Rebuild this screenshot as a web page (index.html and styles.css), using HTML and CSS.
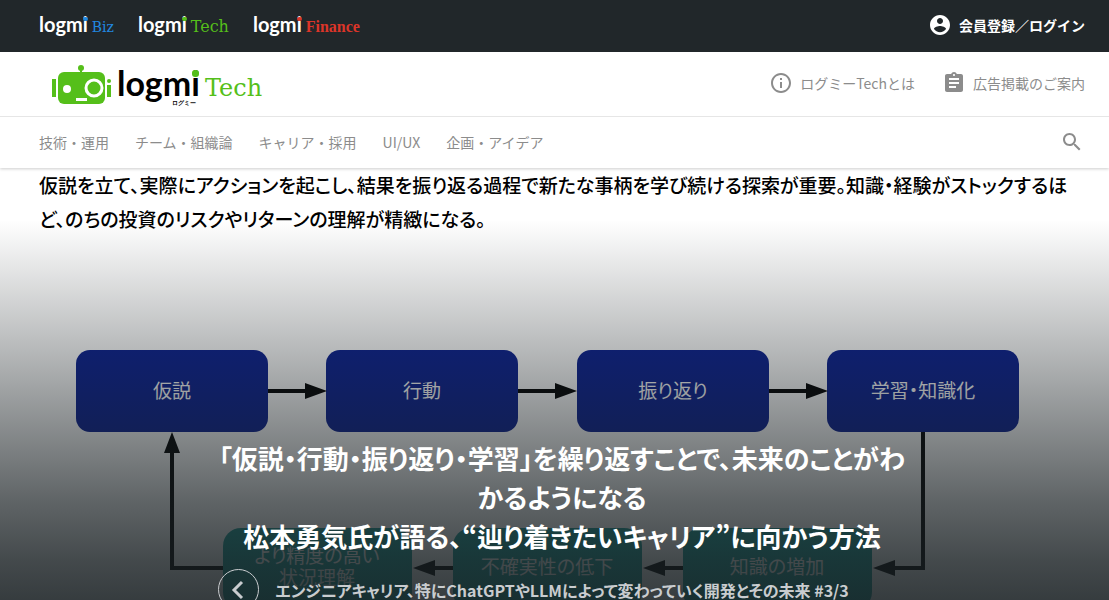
FILE: index.html
```html
<!DOCTYPE html>
<html lang="ja">
<head>
<meta charset="utf-8">
<meta name="viewport" content="width=device-width, initial-scale=1">
<title>logmi Tech</title>
<link rel="stylesheet" href="styles.css">
</head>
<body>
<header class="header">
  <div class="topbar">
    <nav class="brands" aria-label="logmi">
      <a class="brand brand-biz" href="#"><span class="word">logm<span class="dot-i">i</span></span><span class="suffix">Biz</span></a>
      <a class="brand brand-tech" href="#"><span class="word">logm<span class="dot-i">i</span></span><span class="suffix">Tech</span></a>
      <a class="brand brand-finance" href="#"><span class="word">logm<span class="dot-i">i</span></span><span class="suffix">Finance</span></a>
    </nav>
    <a class="login" href="#">
      <svg class="icon" viewBox="0 0 24 24" aria-hidden="true"><path d="M12 2C6.480 2 2 6.480 2 12s4.480 10 10 10 10-4.480 10-10S17.520 2 12 2zm0 3c1.660 0 3 1.340 3 3s-1.340 3-3 3-3-1.340-3-3 1.340-3 3-3zm0 14.200c-2.500 0-4.710-1.280-6-3.220.03-1.990 4-3.080 6-3.080 1.990 0 5.970 1.090 6 3.080-1.290 1.940-3.500 3.220-6 3.220z"/></svg>
      <span>会員登録／ログイン</span>
    </a>
  </div>
  <div class="masthead">
    <a class="logo brand-tech" href="#">
      <svg class="robot" viewBox="0 0 60 42" aria-hidden="true">
        <g fill="#55bf1a">
          <rect x="0" y="15" width="4" height="18"/>
          <circle cx="29" cy="4" r="3"/>
          <rect x="28" y="5" width="2" height="6"/>
          <rect x="6" y="8" width="47" height="32" rx="6"/>
          <rect x="55" y="21" width="4" height="12"/>
          <circle cx="57" cy="17" r="2"/>
        </g>
        <g fill="#fff">
          <circle cx="15" cy="25" r="4"/>
          <rect x="24" y="34" width="11" height="3"/>
        </g>
        <circle cx="42" cy="24" r="8" fill="none" stroke="#fff" stroke-width="3"/>
      </svg>
      <span class="word">logm<span class="dot-i">i</span><span class="ruby">ログミー</span></span><span class="suffix">Tech</span>
    </a>
    <nav class="utility" aria-label="サイト情報">
      <a href="#"><svg class="icon" viewBox="0 0 24 24" aria-hidden="true"><path d="M11 17h2v-6h-2v6zm1-15C6.480 2 2 6.480 2 12s4.480 10 10 10 10-4.480 10-10S17.520 2 12 2zm0 18c-4.410 0-8-3.590-8-8s3.590-8 8-8 8 3.590 8 8-3.590 8-8 8zM11 9h2V7h-2v2z"/></svg><span>ログミーTechとは</span></a>
      <a href="#"><svg class="icon" viewBox="0 0 24 24" aria-hidden="true"><path d="M19 3h-4.180C14.400 1.840 13.300 1 12 1c-1.300 0-2.400.84-2.820 2H5c-1.100 0-2 .9-2 2v14c0 1.100.9 2 2 2h14c1.100 0 2-.9 2-2V5c0-1.100-.9-2-2-2zm-7 0c.55 0 1 .45 1 1s-.45 1-1 1-1-.45-1-1 .45-1 1-1zm2 14H7v-2h7v2zm3-4H7v-2h10v2zm0-4H7V7h10v2z"/></svg><span>広告掲載のご案内</span></a>
    </nav>
  </div>
  <div class="navbar">
    <nav class="categories" aria-label="カテゴリー">
      <a href="#">技術・運用</a>
      <a href="#">チーム・組織論</a>
      <a href="#">キャリア・採用</a>
      <a href="#">UI/UX</a>
      <a href="#">企画・アイデア</a>
    </nav>
    <button class="search" type="button" aria-label="検索"><svg class="icon" viewBox="0 0 24 24" aria-hidden="true"><path d="M15.500 14h-.79l-.28-.27C15.410 12.590 16 11.110 16 9.500 16 5.910 13.090 3 9.500 3S3 5.910 3 9.500 5.910 16 9.500 16c1.610 0 3.090-.59 4.230-1.570l.27.28v.79l5 4.990L20.490 19l-4.990-5zm-6 0C7.010 14 5 11.990 5 9.500S7.010 5 9.500 5 14 7.010 14 9.500 11.990 14 9.500 14z"/></svg></button>
  </div>
</header>
<main class="hero">
  <div class="slide">
    <p class="lead"><span>仮説を立て、実際にアクションを起こし、結果を振り返る過程で新たな事柄を学び続ける探索が重要。知識・経験がストックするほ</span><span>ど、のちの投資のリスクやリターンの理解が精緻になる。</span></p>
    <svg class="diagram" viewBox="0 240 1109 400" role="img" aria-label="仮説、行動、振り返り、学習・知識化のサイクル">
      <g fill="#0a1f90">
        <rect x="76" y="350" width="192" height="82" rx="14"/>
        <rect x="326" y="350" width="192" height="82" rx="14"/>
        <rect x="577" y="350" width="192" height="82" rx="14"/>
        <rect x="827" y="350" width="192" height="82" rx="14"/>
      </g>
      <g fill="#1c9c96">
        <rect x="223" y="528" width="189" height="82" rx="18"/>
        <rect x="453" y="528" width="189" height="82" rx="18"/>
        <rect x="683" y="528" width="189" height="82" rx="18"/>
      </g>
      <g class="wires">
        <path d="M268 391h40M518 391h40M769 391h40M923 432v136h-30M683 568h-20M453 568h-20M223 568h-51V452"/>
      </g>
      <g fill="#000">
        <path d="M327 391l-22-8v16zM577 391l-22-8v16zM828 391l-22-8v16zM873 568l22-8v16zM643 568l22-8v16zM413 568l22-8v16zM172 432l-8 21h16z"/>
      </g>
      <g class="labels">
        <text x="172" y="398">仮説</text>
        <text x="422" y="398">行動</text>
        <text x="673" y="398">振り返り</text>
        <text x="923" y="398">学習・知識化</text>
        <text x="317" y="563">より精度の高い</text>
        <text x="317" y="585">状況理解</text>
        <text x="547" y="574">不確実性の低下</text>
        <text x="777" y="574">知識の増加</text>
      </g>
    </svg>
  </div>
  <div class="caption">
    <h1 class="title">「仮説・行動・振り返り・学習」を繰り返すことで、未来のことがわ<br>かるようになる<br>松本勇気氏が語る、“辿り着きたいキャリア”に向かう方法</h1>
    <div class="series">
      <button class="prev" type="button" aria-label="前の記事"><svg viewBox="0 0 24 24" aria-hidden="true"><path d="M15 4l-8 8 8 8"/></svg></button>
      <a href="#">エンジニアキャリア、特にChatGPTやLLMによって変わっていく開発とその未来 #3/3</a>
    </div>
  </div>
</main>
</body>
</html>
```
FILE: styles.css
```css
* {
  box-sizing: border-box;
}

body {
  margin: 0;
  display: flex;
  flex-direction: column;
  height: 100vh;
  overflow: hidden;
  background: #fff;
  font-family: "Noto Sans CJK JP", sans-serif;
  font-size: 14px;
  line-height: 20px;
}

a {
  color: inherit;
  text-decoration: none;
}

button {
  padding: 0;
  border: 0;
  background: none;
  color: inherit;
}

.icon {
  width: 24px;
  height: 24px;
  fill: currentColor;
}

.header {
  position: relative;
  z-index: 1;
  background: #fff;
  color: #8c8c8c;
  box-shadow: 0 1px 3px rgba(0, 0, 0, 0.2);
}

.topbar,
.masthead,
.navbar {
  display: flex;
  align-items: center;
  justify-content: space-between;
  padding: 0 24px 0 39px;
}

.topbar {
  height: 52px;
  padding-bottom: 3px;
  background: #21272a;
  color: #fff;
}

.brands {
  display: flex;
  gap: 24px;
}

.brand,
.logo {
  display: flex;
  align-items: baseline;
}

.brand {
  gap: 4px;
  padding-top: 2px;
  font-size: 20px;
}

.word {
  position: relative;
  font-family: Lato, sans-serif;
  font-weight: 700;
}

.dot-i {
  position: relative;
}

.dot-i::after {
  content: "";
  position: absolute;
  top: 5px;
  left: 0;
  width: 5px;
  height: 4px;
  border-radius: 2px;
  background: var(--accent);
}

.suffix {
  color: var(--accent);
  font-family: "DejaVu Serif", serif;
  font-size: 16px;
}

.brand-biz {
  --accent: #2188e0;
}

.brand-biz .suffix {
  font-size: 14px;
}

.brand-tech {
  --accent: #55bf1a;
}

.brand-finance {
  --accent: #dc3529;
}

.brand-finance .suffix {
  font-family: "Liberation Serif", serif;
  font-weight: 700;
}

.login {
  display: flex;
  align-items: center;
  gap: 7px;
  font-weight: 700;
}

.masthead {
  height: 65px;
  padding-bottom: 2px;
  border-bottom: 1px solid #e6e6e6;
}

.logo {
  gap: 5px;
  margin-left: 13px;
  padding-top: 4px;
  color: #000;
  font-size: 34px;
  line-height: 40px;
}

.robot {
  align-self: center;
  width: 60px;
  height: 42px;
}

.logo .suffix {
  font-size: 24px;
}

.logo .dot-i::after {
  top: 8px;
  left: 1px;
  width: 7px;
  height: 7px;
  border-radius: 3px;
}

.ruby {
  position: absolute;
  right: 4px;
  bottom: -4px;
  font-size: 6px;
  line-height: 8px;
}

.utility {
  display: flex;
  gap: 27px;
}

.utility a {
  display: flex;
  align-items: center;
  gap: 7px;
}

.navbar {
  height: 51px;
  padding-bottom: 2px;
}

.categories {
  display: flex;
  gap: 26px;
}

.search {
  display: flex;
  margin-right: 1px;
}

.hero {
  position: relative;
  display: grid;
  flex: 1;
  min-height: 0;
  overflow: hidden;
  font-feature-settings: "palt";
}

.slide,
.caption {
  grid-area: 1 / 1;
}

.hero::before {
  content: "";
  position: absolute;
  inset: 0;
  z-index: 1;
  background: linear-gradient(rgba(24, 31, 34, 0) 12%, rgba(24, 31, 34, 0.07) 19%, rgba(24, 31, 34, 0.26) 37%, rgba(24, 31, 34, 0.41) 51%, rgba(24, 31, 34, 0.52) 61%, rgba(24, 31, 34, 0.69) 77%, rgba(24, 31, 34, 0.81) 91%, rgba(24, 31, 34, 0.87) 100%);
}

.lead {
  margin: 0;
  padding: 0 24px 4px 39px;
  font-size: 19px;
  font-weight: 500;
  line-height: 34px;
}

.lead span {
  display: block;
  white-space: nowrap;
}

.diagram {
  display: block;
  width: 100%;
}

.wires {
  fill: none;
  stroke: #000;
  stroke-width: 4;
}

.labels {
  fill: #fff;
  font-size: 19px;
  text-anchor: middle;
}

.caption {
  z-index: 2;
  padding: 270px 24px 0 39px;
  color: #fff;
  text-align: center;
}

.title {
  margin: 0;
  font-size: 26px;
  font-weight: 700;
  line-height: 39px;
}

.series {
  display: grid;
  grid-template-columns: 41px auto 41px;
  align-items: center;
  justify-content: center;
  gap: 16px;
  margin-top: 14px;
  color: #c9cccf;
  font-size: 16px;
  font-weight: 700;
}

.prev {
  display: grid;
  place-items: center;
  width: 41px;
  height: 41px;
  border: 1px solid currentColor;
  border-radius: 50%;
}

.prev svg {
  width: 24px;
  height: 24px;
  fill: none;
  stroke: currentColor;
  stroke-width: 3;
}
```
